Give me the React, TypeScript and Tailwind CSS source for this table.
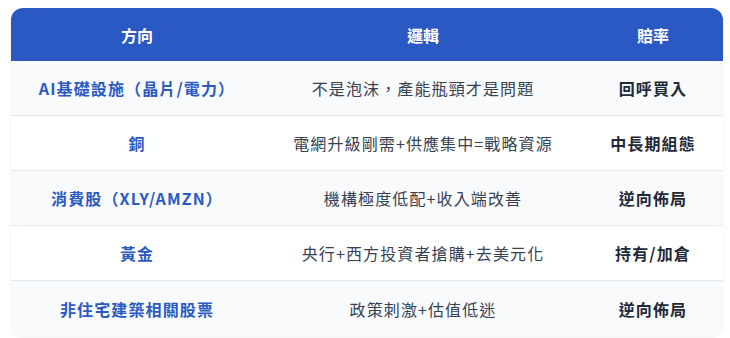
import React from "react";

const rows = [
  { dir: "AI基礎設施（晶片/電力）", logic: "不是泡沫，產能瓶頸才是問題", odds: "回呼買入" },
  { dir: "銅", logic: "電網升級剛需+供應集中=戰略資源", odds: "中長期組態" },
  { dir: "消費股（XLY/AMZN）", logic: "機構極度低配+收入端改善", odds: "逆向佈局" },
  { dir: "黃金", logic: "央行+西方投資者搶購+去美元化", odds: "持有/加倉" },
  { dir: "非住宅建築相關股票", logic: "政策刺激+估值低迷", odds: "逆向佈局" },
];

export default function App() {
  return (
    <div className="h-[338px] w-[730px] bg-white px-[11px] pt-[8px] font-['Noto_Sans_CJK_TC','Noto_Sans',sans-serif]">
      <div className="w-[712px] overflow-hidden rounded-xl bg-[#f8fafc] shadow-[0_1px_3px_rgba(0,0,0,0.08)]">
        <div className="grid h-[53px] grid-cols-[252px_320px_140px] items-center bg-[#2b59c3] text-[16px] font-bold text-white">
          <div className="text-center">方向</div>
          <div className="text-center">邏輯</div>
          <div className="text-center">賠率</div>
        </div>
        {rows.map((r, i) => (
          <div
            key={i}
            className={`grid h-[55px] grid-cols-[252px_320px_140px] items-center text-[16px] tracking-[0.07em] ${
              i % 2 === 0 ? "bg-[#f8fafc]" : "bg-white"
            } ${i < rows.length - 1 ? "border-b border-[#e2e8f0]" : ""}`}
          >
            <div className="text-center font-bold text-[#2b59c3]">{r.dir}</div>
            <div className="text-center text-[#374151]">{r.logic}</div>
            <div className="text-center font-bold text-[#1f2937]">{r.odds}</div>
          </div>
        ))}
      </div>
    </div>
  );
}
